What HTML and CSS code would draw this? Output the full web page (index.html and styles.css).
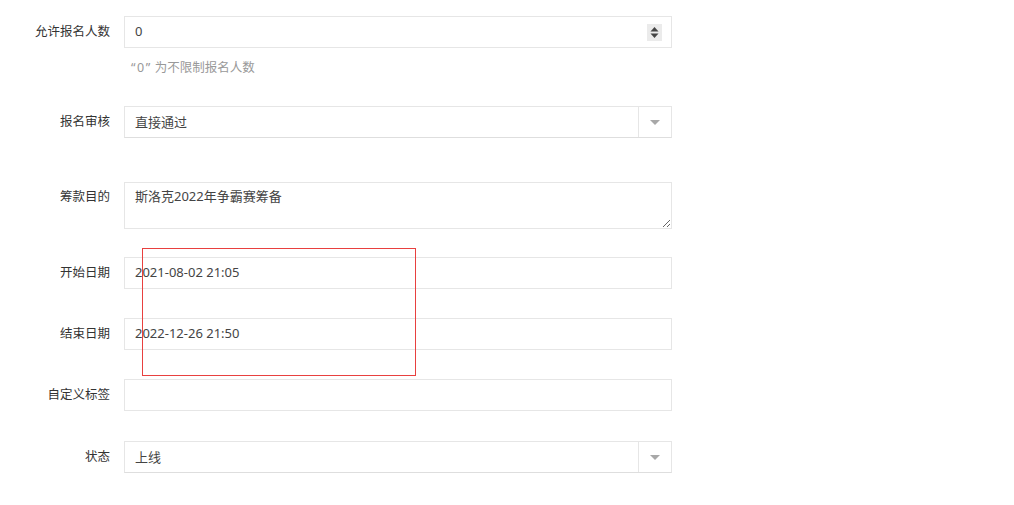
FILE: index.html
```html
<html>

<head>
  <meta charset="utf-8">
  <link rel="stylesheet" href="styles.css">
</head>

<body>
  <form class="form">
    <!-- number of people allowed to sign up -->
    <div class="row row-hint">
      <label class="label">允许报名人数</label>
      <div class="field">
        <div class="box">
          <input class="text" type="text" value="0">
          <span class="spin">
            <svg width="15" height="17" viewBox="0 0 15 17">
              <path d="M3.5 7.5 L7.5 3 L11.5 7.5 Z" fill="#444"/>
              <path d="M3.5 9.5 L7.5 14 L11.5 9.5 Z" fill="#444"/>
            </svg>
          </span>
        </div>
        <div class="hint"><span class="quote">“0”</span>为不限制报名人数</div>
      </div>
    </div>

    <div class="row row-wide">
      <label class="label">报名审核</label>
      <div class="field">
        <div class="box select">
          <input class="text" type="text" value="直接通过" readonly>
          <span class="arrow"><i class="caret"></i></span>
        </div>
      </div>
    </div>

    <div class="row row-area">
      <label class="label label-area">筹款目的</label>
      <div class="field">
        <textarea class="area">斯洛克2022年争霸赛筹备</textarea>
      </div>
    </div>

    <div class="row">
      <label class="label">开始日期</label>
      <div class="field">
        <div class="box"><input class="text" type="text" value="2021-08-02 21:05"></div>
      </div>
    </div>

    <div class="row">
      <label class="label">结束日期</label>
      <div class="field">
        <div class="box"><input class="text" type="text" value="2022-12-26 21:50"></div>
      </div>
    </div>

    <div class="row row-tag">
      <label class="label">自定义标签</label>
      <div class="field">
        <div class="box"><input class="text" type="text" value=""></div>
      </div>
    </div>

    <div class="row">
      <label class="label">状态</label>
      <div class="field">
        <div class="box select">
          <input class="text" type="text" value="上线" readonly>
          <span class="arrow"><i class="caret"></i></span>
        </div>
      </div>
    </div>

    <!-- red selection marker over the date fields -->
    <div class="marker"></div>
  </form>
</body>

</html>
```

FILE: styles.css
```css
body {
  margin: 0;
  background: #fff;
  font-family: "Noto Sans", "Noto Sans CJK SC", sans-serif;
  font-size: 13px;
  color: #333;
}

.form {
  position: relative;
  padding-top: 16px;
  margin: 0;
}

.row {
  display: flex;
  align-items: flex-start;
  margin-bottom: 29px;
}

.row-hint {
  margin-bottom: 30px;
}

.row-wide {
  margin-bottom: 44px;
}

.row-area {
  margin-bottom: 28px;
}

.row-tag {
  margin-bottom: 30px;
}

.label {
  width: 110px;
  flex: none;
  text-align: right;
  line-height: 31px;
  font-size: 12.5px;
  color: #333;
  margin-right: 14px;
}

.label-area {
  line-height: 29px;
}

.field {
  width: 548px;
}

.box {
  display: flex;
  align-items: center;
  height: 32px;
  box-sizing: border-box;
  border: 1px solid #e6e6e6;
  background: #fff;
}

.text {
  flex: 1;
  min-width: 0;
  height: 100%;
  border: 0;
  outline: none;
  padding: 0 10px 2px;
  font-family: inherit;
  font-size: 13px;
  color: #444;
  background: transparent;
}

.spin {
  display: flex;
  width: 15px;
  height: 17px;
  margin-right: 9px;
  background: #ebebeb;
}

.select {
  border-bottom-color: #dedede;
}

.arrow {
  display: flex;
  align-items: center;
  justify-content: center;
  width: 32px;
  height: 100%;
  border-left: 1px solid #e6e6e6;
}

.caret {
  display: block;
  width: 0;
  height: 0;
  border-left: 5px solid transparent;
  border-right: 5px solid transparent;
  border-top: 5px solid #a8a8a8;
}

.hint {
  margin-top: 12px;
  padding-left: 7px;
  line-height: 16px;
  font-size: 12.5px;
  color: #999;
}

.quote {
  letter-spacing: 1.5px;
  margin-right: 3px;
}

.area {
  display: block;
  width: 548px;
  height: 47px;
  box-sizing: border-box;
  border: 1px solid #e6e6e6;
  padding: 3px 10px;
  line-height: 20px;
  font-family: inherit;
  font-size: 13px;
  color: #444;
  outline: none;
}

.marker {
  position: absolute;
  left: 142px;
  top: 248px;
  width: 274px;
  height: 128px;
  box-sizing: border-box;
  border: 1px solid #e8403f;
  pointer-events: none;
}
```
